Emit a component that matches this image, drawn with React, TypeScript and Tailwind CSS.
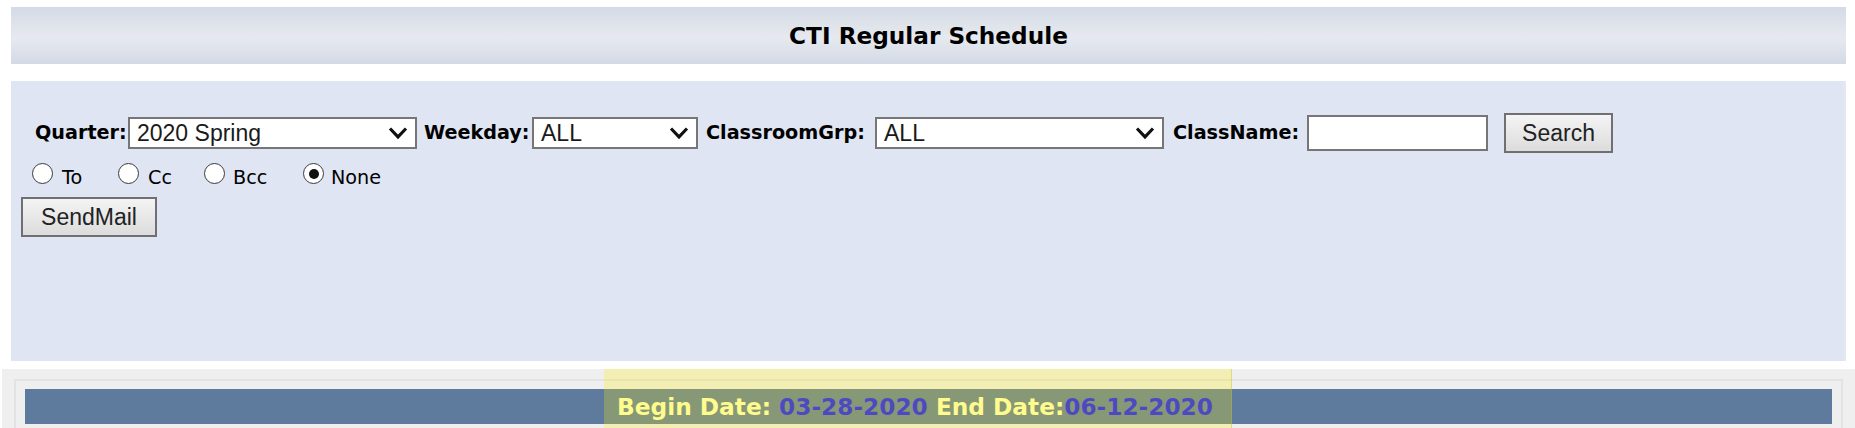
import React from "react";

const Chevron = () => (
  <svg
    width="20"
    height="13"
    viewBox="0 0 20 13"
    className="absolute right-[7px] top-1/2 -translate-y-1/2"
  >
    <path d="M2 2 L10 10.4 L18 2" fill="none" stroke="#111" strokeWidth="3.1" />
  </svg>
);

const labelCls =
  "shrink-0 whitespace-nowrap font-bold text-[19.2px] leading-none text-black font-['DejaVu_Sans',Verdana,sans-serif]";
const arialCls = "font-['Liberation_Sans',Arial,sans-serif]";

function Radio({ checked }: { checked?: boolean }) {
  return (
    <span className="mt-[3px] flex h-[21px] w-[21px] shrink-0 items-center justify-center rounded-full border border-[#3a3a3a] bg-white">
      {checked ? <span className="h-[10px] w-[10px] rounded-full bg-[#111]" /> : null}
    </span>
  );
}

const radioText =
  "mt-[8px] leading-none text-[19.2px] text-black font-['DejaVu_Sans',Verdana,sans-serif]";

export default function App() {
  return (
    <div className="min-h-screen bg-white pt-[7px]">
      <header className="ml-[11px] mr-[9px] flex h-[57px] items-center justify-center bg-[linear-gradient(to_bottom,#d4dae6_0%,#e2e6ec_40%,#e6e9ef_55%,#d3d9e6_100%)]">
        <h1 className="font-bold text-[23.2px] leading-none text-black font-['DejaVu_Sans',Verdana,sans-serif]">
          CTI Regular Schedule
        </h1>
      </header>

      <section className="ml-[11px] mr-[9px] mt-[17px] h-[280px] border-r-[3px] border-[#e4e7ef] bg-[#dfe5f2] pl-[10px] pt-[32px]">
        <div className="ml-[14px] flex h-[40px] items-center">
          <span className={`${labelCls} w-[93px]`}>Quarter:</span>
          <div className={`relative flex h-[32px] w-[289px] shrink-0 items-center border-2 border-[#767676] bg-white pl-[7px] text-[23px] leading-none text-[#1a1a1a] ${arialCls}`}>
            2020 Spring
            <Chevron />
          </div>
          <span className={`${labelCls} ml-[7px] w-[108px]`}>Weekday:</span>
          <div className={`relative flex h-[32px] w-[166px] shrink-0 items-center border-2 border-[#767676] bg-white pl-[7px] text-[23px] leading-none text-[#1a1a1a] ${arialCls}`}>
            ALL
            <Chevron />
          </div>
          <span className={`${labelCls} ml-[8px] w-[169px]`}>ClassroomGrp:</span>
          <div className={`relative flex h-[32px] w-[289px] shrink-0 items-center border-2 border-[#767676] bg-white pl-[7px] text-[23px] leading-none text-[#1a1a1a] ${arialCls}`}>
            ALL
            <Chevron />
          </div>
          <span className={`${labelCls} ml-[9px] w-[134px]`}>ClassName:</span>
          <input
            type="text"
            className="h-[36px] w-[181px] shrink-0 border-2 border-[#767676] bg-white outline-none"
          />
          <button
            className={`ml-[16px] flex h-[40px] w-[109px] shrink-0 items-center justify-center border-2 border-[#707070] bg-[linear-gradient(to_bottom,#f4f4f4,#dcdcdc)] text-[23px] leading-none text-[#222] ${arialCls}`}
          >
            Search
          </button>
        </div>

        <div className="ml-[11px] mt-[7px] flex h-[28px] items-start">
          <div className="flex w-[86px] items-start">
            <Radio />
            <span className={`${radioText} ml-[9px]`}>To</span>
          </div>
          <div className="flex w-[86px] items-start">
            <Radio />
            <span className={`${radioText} ml-[9px]`}>Cc</span>
          </div>
          <div className="flex w-[99px] items-start">
            <Radio />
            <span className={`${radioText} ml-[8px]`}>Bcc</span>
          </div>
          <div className="flex items-start">
            <Radio checked />
            <span className={`${radioText} ml-[7px]`}>None</span>
          </div>
        </div>

        <div className="mt-[9px]">
          <button
            className={`flex h-[40px] w-[136px] items-center justify-center border-2 border-[#707070] bg-[linear-gradient(to_bottom,#f4f4f4,#dcdcdc)] text-[23px] leading-none text-[#222] ${arialCls}`}
          >
            SendMail
          </button>
        </div>
      </section>

      <div className="relative ml-[2px] mt-[8px] h-[80px] bg-[#efefef] px-[12px] pt-[10px]">
        <div className="h-[70px] border-2 border-[#e3e3e3] px-[9px] pt-[8px]">
          <div className="flex h-[35px] items-center justify-center bg-[#5e7a9d] pr-[27px]">
            <span className="whitespace-nowrap font-bold text-[23.25px] leading-none font-['DejaVu_Sans',Verdana,sans-serif]">
              <span className="text-[#ffffbb]">Begin Date: </span>
              <span className="text-[#1010ff]">03-28-2020</span>
              <span className="text-[#ffffbb]"> End Date:</span>
              <span className="text-[#1010ff]">06-12-2020</span>
            </span>
          </div>
        </div>
        <div className="pointer-events-none absolute left-[602px] top-0 h-full w-[628px] border-r border-[rgba(190,180,40,0.35)] bg-[rgba(255,239,10,0.26)]" />
      </div>
    </div>
  );
}
